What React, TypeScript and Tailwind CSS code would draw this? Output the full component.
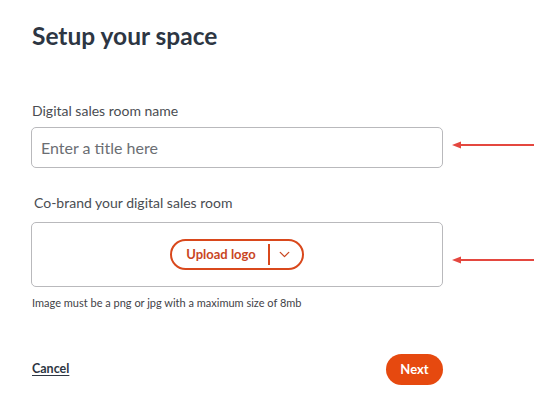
import { ChevronDown } from "lucide-react";

function Arrow({ shift }: { shift: number }) {
  return (
    <svg
      width="84"
      height="10"
      viewBox="0 0 84 10"
      className="ml-[9px] shrink-0"
      style={{ transform: `translateY(${shift}px)` }}
    >
      <line x1="6" y1="5" x2="82" y2="5" stroke="#e4473f" strokeWidth="2" />
      <path d="M0 5 L9 1.5 L9 8.5 Z" fill="#e4473f" />
    </svg>
  );
}

export default function App() {
  return (
    <div
      className="min-h-screen w-full bg-white pl-[32px] pt-[20px] text-[#3b3f45]"
      style={{ fontFamily: "Lato, 'Noto Sans', sans-serif" }}
    >
      <h1 className="text-[24.5px] font-bold leading-[32px] text-[#2d3643]">Setup your space</h1>

      <div className="mt-[50px] text-[14px] leading-[18px] text-[#4a4d52]">Digital sales room name</div>
      <div className="mt-[7px] flex items-center">
        <div className="ml-[-1px] flex h-[41px] w-[412px] items-center rounded-[5px] border border-[#b9b9bc] px-[9px] text-[16px] text-[#6b6e73]">
          Enter a title here
        </div>
        <Arrow shift={-3} />
      </div>

      <div className="ml-[2px] mt-[26px] text-[14px] leading-[18px] text-[#4a4d52]">Co-brand your digital sales room</div>
      <div className="mt-[10px] flex items-center">
        <div className="ml-[-1px] flex h-[65px] w-[412px] items-center justify-center rounded-[5px] border border-[#b9b9bc]">
          <div className="flex h-[31px] items-center rounded-full border-2 border-[#d9481c] text-[#c9461f]">
            <span className="pl-[14px] pr-[12px] text-[13px] font-bold">Upload logo</span>
            <span className="h-[21px] w-[2px] bg-[#d9481c]" />
            <span className="flex w-[32px] items-center justify-center pr-[2px]">
              <ChevronDown size={17} strokeWidth={1.75} />
            </span>
          </div>
        </div>
        <Arrow shift={5} />
      </div>

      <div className="mt-[8px] text-[11px] leading-[16px] text-[#3f4247]">
        Image must be a png or jpg with a maximum size of 8mb
      </div>

      <div className="mt-[43px] flex w-[411px] items-center justify-between">
        <span className="text-[12.5px] font-bold text-[#2d3643] underline underline-offset-2">Cancel</span>
        <button className="h-[31px] w-[57px] rounded-full bg-[#e6490f] text-[13px] font-bold text-white">
          Next
        </button>
      </div>
    </div>
  );
}
